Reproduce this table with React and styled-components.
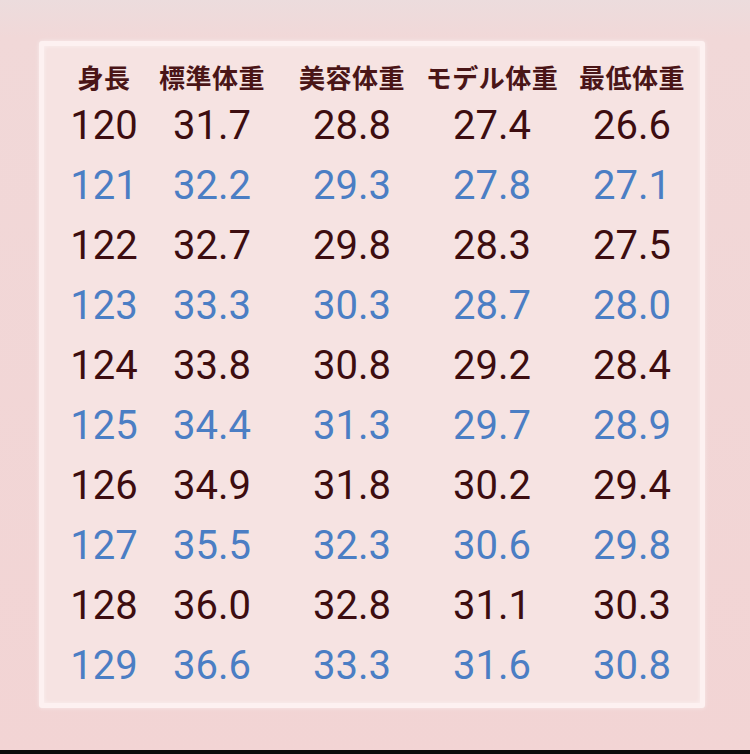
import React from "react";
import styled, { createGlobalStyle } from "styled-components";

const GlobalStyle = createGlobalStyle`
  html, body {
    margin: 0;
    padding: 0;
  }
  body {
    background: #f2d6d6;
    font-family: Roboto, "Noto Sans", sans-serif;
  }
`;

const Page = styled.div`
  width: 750px;
  height: 754px;
  display: flex;
  flex-direction: column;
  background: linear-gradient(180deg, #ecdcdd 0%, #f1d8d8 5%, #f2d4d4 100%);
  overflow: hidden;
`;

const Stage = styled.div`
  flex: 1;
  padding: 41px 0 0 39px;
`;

const BottomBar = styled.div`
  height: 4px;
  background: #0c0c0c;
`;

const Panel = styled.div`
  box-sizing: border-box;
  width: 666px;
  height: 667px;
  padding: 10px 0 0 24px;
  background: #f6e3e2;
  border: 5px solid rgba(255, 246, 246, 0.75);
  border-radius: 3px;
  box-shadow: 0 0 4px rgba(255, 255, 255, 0.5), inset 0 0 4px rgba(255, 255, 255, 0.5);
`;

const Table = styled.div`
  display: grid;
  grid-template-columns: 72px 144px 136px 144px 136px;
  grid-template-rows: 40px;
  grid-auto-rows: 60px;
  justify-items: center;
  align-items: center;
`;

const Head = styled.div`
  font-family: "Noto Sans CJK JP", "Noto Sans CJK SC", sans-serif;
  font-weight: 700;
  font-size: 26px;
  letter-spacing: 0.5px;
  color: #4a1517;
  white-space: nowrap;
`;

const Cell = styled.div`
  font-family: Roboto, "Noto Sans", sans-serif;
  font-weight: 400;
  font-size: 40px;
  line-height: 1;
  color: ${(p) => (p.$blue ? "#4b7ec4" : "#3d0d10")};
  white-space: nowrap;
`;

const headers = ["身長", "標準体重", "美容体重", "モデル体重", "最低体重"];

const rows = [
  ["120", "31.7", "28.8", "27.4", "26.6"],
  ["121", "32.2", "29.3", "27.8", "27.1"],
  ["122", "32.7", "29.8", "28.3", "27.5"],
  ["123", "33.3", "30.3", "28.7", "28.0"],
  ["124", "33.8", "30.8", "29.2", "28.4"],
  ["125", "34.4", "31.3", "29.7", "28.9"],
  ["126", "34.9", "31.8", "30.2", "29.4"],
  ["127", "35.5", "32.3", "30.6", "29.8"],
  ["128", "36.0", "32.8", "31.1", "30.3"],
  ["129", "36.6", "33.3", "31.6", "30.8"],
];

export default function App() {
  return (
    <Page>
      <GlobalStyle />
      <Stage>
        <Panel>
          <Table>
            {headers.map((h) => (
              <Head key={h}>{h}</Head>
            ))}
            {rows.map((row, i) =>
              row.map((v, j) => (
                <Cell key={i + "-" + j} $blue={i % 2 === 1}>
                  {v}
                </Cell>
              ))
            )}
          </Table>
        </Panel>
      </Stage>
      <BottomBar />
    </Page>
  );
}
